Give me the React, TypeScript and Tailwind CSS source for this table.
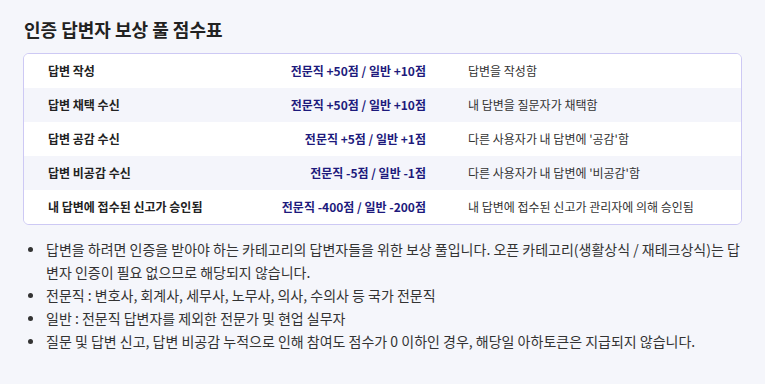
import React from "react";

const rows = [
  { a: "답변 작성", p: "전문직 +50점 / 일반 +10점", d: "답변을 작성함" },
  { a: "답변 채택 수신", p: "전문직 +50점 / 일반 +10점", d: "내 답변을 질문자가 채택함" },
  { a: "답변 공감 수신", p: "전문직 +5점 / 일반 +1점", d: "다른 사용자가 내 답변에 '공감'함" },
  { a: "답변 비공감 수신", p: "전문직 -5점 / 일반 -1점", d: "다른 사용자가 내 답변에 '비공감'함" },
  { a: "내 답변에 접수된 신고가 승인됨", p: "전문직 -400점 / 일반 -200점", d: "내 답변에 접수된 신고가 관리자에 의해 승인됨" },
];

const notes: React.ReactNode[] = [
  <>
    <span className="whitespace-nowrap">
      답변을 하려면 인증을 받아야 하는 카테고리의 답변자들을 위한 보상 풀입니다. 오픈 카테고리(생활상식 / 재테크상식)는 답
    </span>
    <br />
    변자 인증이 필요 없으므로 해당되지 않습니다.
  </>,
  "전문직 : 변호사, 회계사, 세무사, 노무사, 의사, 수의사 등 국가 전문직",
  "일반 : 전문직 답변자를 제외한 전문가 및 현업 실무자",
  "질문 및 답변 신고, 답변 비공감 누적으로 인해 참여도 점수가 0 이하인 경우, 해당일 아하토큰은 지급되지 않습니다.",
];

export default function App() {
  return (
    <div
      className="w-[765px] h-[384px] bg-[#f5f6fb] px-[23px] pt-[16px] overflow-hidden"
      style={{ fontFamily: '"Noto Sans CJK KR", "Noto Sans", sans-serif' }}
    >
      <h1 className="text-[18px] leading-[27px] font-bold text-[#222] pl-[1px]">
        인증 답변자 보상 풀 점수표
      </h1>
      <div className="mt-[10px] rounded-[6px] border border-[#cdc9f4] bg-white overflow-hidden">
        {rows.map((r, i) => (
          <div
            key={i}
            className={`flex items-center h-[34px] px-6 text-[12px] ${
              i % 2 === 1 ? "bg-[#f4f5fb]" : "bg-white"
            }`}
          >
            <div className="w-[180px] font-bold text-[#222]">{r.a}</div>
            <div className="w-[198px] text-right font-bold text-[#1d1a7c]">{r.p}</div>
            <div className="pl-[42px] text-[#333]">{r.d}</div>
          </div>
        ))}
      </div>
      <ul className="mt-[13px] text-[14px] leading-[23px] text-[#333]">
        {notes.map((n, i) => (
          <li key={i} className="flex">
            <span className="w-[23px] shrink-0 flex justify-start pt-[9px] pl-[5px]">
              <span className="block w-[5px] h-[5px] rounded-full bg-[#333]" />
            </span>
            <span className="flex-1 pr-[4px]">{n}</span>
          </li>
        ))}
      </ul>
    </div>
  );
}
